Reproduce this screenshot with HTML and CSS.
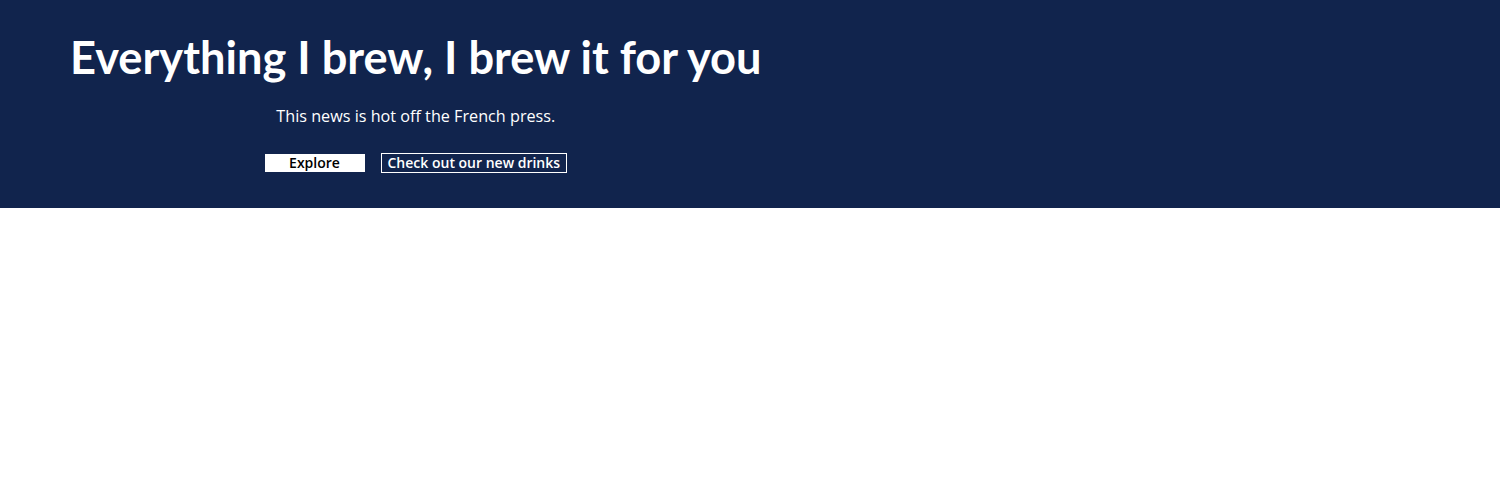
FILE: index.html
```html
<!DOCTYPE html>
<html lang="en">
<head>
<meta charset="utf-8">
<title>Everything I brew</title>
<link rel="stylesheet" href="styles.css">
</head>
<body>
<header class="hero">
  <div class="hero-inner">
    <h1 class="hero-title">Everything I brew, I brew it for you</h1>
    <p class="hero-sub">This news is hot off the French press.</p>
    <div class="hero-actions">
      <a class="btn btn-solid" href="#">Explore</a>
      <a class="btn btn-outline" href="#">Check out our new drinks</a>
    </div>
  </div>
</header>
</body>
</html>
```
FILE: styles.css
```css
* { box-sizing: border-box; }
html, body { margin: 0; padding: 0; background: #fff; }
body { font-family: "Open Sans", "Noto Sans", sans-serif; }
.hero {
  background: #11244d;
  color: #fff;
  height: 208px;
  padding: 28px 70px 0;
}
.hero-inner {
  display: inline-flex;
  flex-direction: column;
  align-items: center;
}
.hero-title {
  margin: 0;
  font-family: "Lato", "Noto Sans", sans-serif;
  font-weight: 700;
  font-size: 45.2px;
  line-height: 58px;
  letter-spacing: 0;
}
.hero-sub {
  margin: 18px 0 0;
  font-size: 16.2px;
  line-height: 24px;
}
.hero-actions {
  display: flex;
  gap: 16px;
  margin-top: 25px;
  align-items: center;
}
.btn {
  font-size: 14px;
  font-weight: 600;
  line-height: 17px;
  text-decoration: none;
  text-align: center;
}
.btn-solid {
  background: #fff;
  color: #000;
  width: 100px;
  height: 18px;
}
.btn-outline {
  color: #fff;
  border: 1px solid #fff;
  padding: 0 6px;
  height: 20px;
  line-height: 18px;
}
```
